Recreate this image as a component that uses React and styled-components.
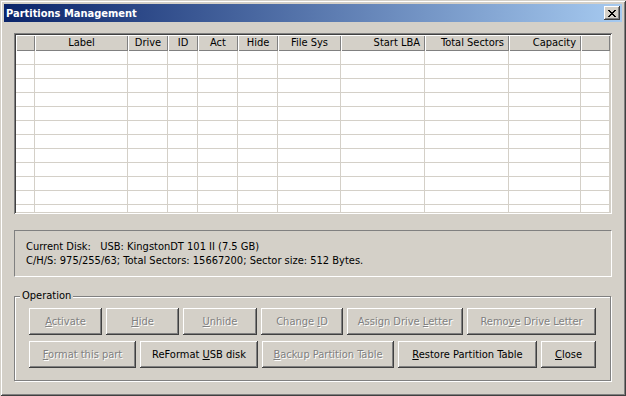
import React from 'react';
import styled, { createGlobalStyle } from 'styled-components';

const Global = createGlobalStyle`
  html, body { margin: 0; padding: 0; background: #D4D0C8; }
  body {
    width: 626px; height: 396px; overflow: hidden;
    font-family: "DejaVu Sans Condensed", "DejaVu Sans", "Liberation Sans", sans-serif;
    font-stretch: condensed;
    font-size: 11px; color: #000;
  }
`;

const Window = styled.div`
  width: 626px; height: 396px; box-sizing: border-box; padding: 4px;
  background: #D4D0C8;
  box-shadow: inset 1px 1px 0 #D4D0C8, inset -1px -1px 0 #404040,
    inset 2px 2px 0 #fff, inset -2px -2px 0 #808080;
  display: flex; flex-direction: column;
`;

const TitleBar = styled.div`
  height: 18px; flex: none;
  background: linear-gradient(to right, #0A246A, #A6CAF0);
  display: flex; align-items: center; justify-content: space-between;
  padding: 0 2px 0 2px;
`;

const Title = styled.span`
  color: #fff; font-weight: bold; font-size: 11px; letter-spacing: 0;
`;

const CloseBox = styled.div`
  width: 16px; height: 14px; box-sizing: border-box;
  background: #D4D0C8;
  box-shadow: inset -1px -1px 0 #404040, inset 1px 1px 0 #fff,
    inset -2px -2px 0 #808080;
  display: flex; align-items: center; justify-content: center;
`;

const Client = styled.div`
  flex: 1; display: flex; flex-direction: column;
  padding: 11px 10px 0 10px;
`;

const GridFrame = styled.div`
  height: 181px; box-sizing: border-box; padding: 2px; background: #fff;
  box-shadow: inset 1px 1px 0 #808080, inset -1px -1px 0 #fff,
    inset 2px 2px 0 #404040, inset -2px -2px 0 #D4D0C8;
  overflow: hidden;
`;

const GridTable = styled.div`
  display: grid;
  grid-template-columns: 19px 93px 40px 30px 40px 40px 63px 84px 84px 72px 1fr;
  grid-template-rows: 16px;
  grid-auto-rows: 14px;
  height: 177px; overflow: hidden;
`;

const HeadCell = styled.div`
  background: #D4D0C8;
  box-shadow: inset 1px 1px 0 #fff, inset -1px -1px 0 #808080;
  line-height: 16px; white-space: nowrap; overflow: hidden;
  padding: 0 5px;
  text-align: ${p => p.$align || 'center'};
`;

const BodyCell = styled.div`
  box-sizing: border-box;
  border-right: 1px solid #D4D0C8;
  border-bottom: 1px solid #D4D0C8;
`;

const InfoBox = styled.div`
  margin-top: 16px; height: 47px; box-sizing: border-box;
  border: 1px solid; border-color: #808080 #fff #fff #808080;
  padding: 9px 11px; line-height: 14px; white-space: nowrap;
`;

const Group = styled.div`
  position: relative;
  margin-top: 19px; height: 85px; width: 597px; box-sizing: border-box;
  border: 1px solid #808080;
  box-shadow: 1px 1px 0 #fff, inset 1px 1px 0 #fff;
  padding: 11px 0 0 14px;
  display: flex; flex-direction: column; gap: 6px;
`;

const Legend = styled.span`
  position: absolute; top: -8px; left: 5px;
  background: #D4D0C8; padding: 0 2px; line-height: 14px;
`;

const ButtonRow = styled.div`
  display: flex; gap: 4px;
`;

const Button = styled.button`
  width: ${p => p.$w}px; height: 27px; box-sizing: border-box;
  margin: 0; padding: 0;
  border: none; background: #D4D0C8;
  box-shadow: inset -1px -1px 0 #404040, inset 1px 1px 0 #fff,
    inset -2px -2px 0 #808080;
  font: inherit; font-size: 11px;
  color: ${p => (p.disabled ? '#808080' : '#000')};
  text-shadow: ${p => (p.disabled ? '1px 1px 0 #fff' : 'none')};
  white-space: nowrap;
`;

const Mn = styled.u`
  text-decoration: underline;
  text-underline-offset: 1px;
`;

const columns = [
  { t: '', a: 'center' },
  { t: 'Label', a: 'center' },
  { t: 'Drive', a: 'center' },
  { t: 'ID', a: 'center' },
  { t: 'Act', a: 'center' },
  { t: 'Hide', a: 'center' },
  { t: 'File Sys', a: 'center' },
  { t: 'Start LBA', a: 'right' },
  { t: 'Total Sectors', a: 'right' },
  { t: 'Capacity', a: 'right' },
  { t: '', a: 'center' },
];

const label = (pre, key, post) => (
  <>
    {pre}
    <Mn>{key}</Mn>
    {post}
  </>
);

const row1 = [
  { w: 73, c: label('', 'A', 'ctivate'), d: true },
  { w: 73, c: label('', 'H', 'ide'), d: true },
  { w: 74, c: label('', 'U', 'nhide'), d: true },
  { w: 82, c: label('Change ', 'I', 'D'), d: true },
  { w: 116, c: label('Assign Drive ', 'L', 'etter'), d: true },
  { w: 129, c: label('Remo', 'v', 'e Drive Letter'), d: true },
];

const row2 = [
  { w: 107, c: label('', 'F', 'ormat this part'), d: true },
  { w: 118, c: label('ReFormat ', 'U', 'SB disk'), d: false },
  { w: 132, c: label('', 'B', 'ackup Partition Table'), d: true },
  { w: 139, c: label('', 'R', 'estore Partition Table'), d: false },
  { w: 55, c: label('', 'C', 'lose'), d: false },
];

export default function App() {
  const rows = Array.from({ length: 12 });
  return (
    <>
      <Global />
      <Window>
        <TitleBar>
          <Title>Partitions Management</Title>
          <CloseBox>
            <svg width="8" height="7" viewBox="0 0 8 7" shapeRendering="crispEdges">
              <path
                d="M0 0h2v1h-2zM6 0h2v1h-2zM1 1h2v1h-2zM5 1h2v1h-2zM2 2h4v1h-4zM3 3h2v1h-2zM2 4h4v1h-4zM1 5h2v1h-2zM5 5h2v1h-2zM0 6h2v1h-2zM6 6h2v1h-2z"
                fill="#000"
              />
            </svg>
          </CloseBox>
        </TitleBar>
        <Client>
          <GridFrame>
            <GridTable>
              {columns.map((c, i) => (
                <HeadCell key={'h' + i} $align={c.a}>{c.t}</HeadCell>
              ))}
              {rows.map((_, r) =>
                columns.map((c, i) => <BodyCell key={r + '-' + i} />)
              )}
            </GridTable>
          </GridFrame>
          <InfoBox>
            <div>Current Disk:&nbsp;&nbsp;&nbsp;USB: KingstonDT 101 II (7.5 GB)</div>
            <div>C/H/S: 975/255/63; Total Sectors: 15667200; Sector size: 512 Bytes.</div>
          </InfoBox>
          <Group>
            <Legend>Operation</Legend>
            <ButtonRow>
              {row1.map((b, i) => (
                <Button key={i} $w={b.w} disabled={b.d}>{b.c}</Button>
              ))}
            </ButtonRow>
            <ButtonRow>
              {row2.map((b, i) => (
                <Button key={i} $w={b.w} disabled={b.d}>{b.c}</Button>
              ))}
            </ButtonRow>
          </Group>
        </Client>
      </Window>
    </>
  );
}
